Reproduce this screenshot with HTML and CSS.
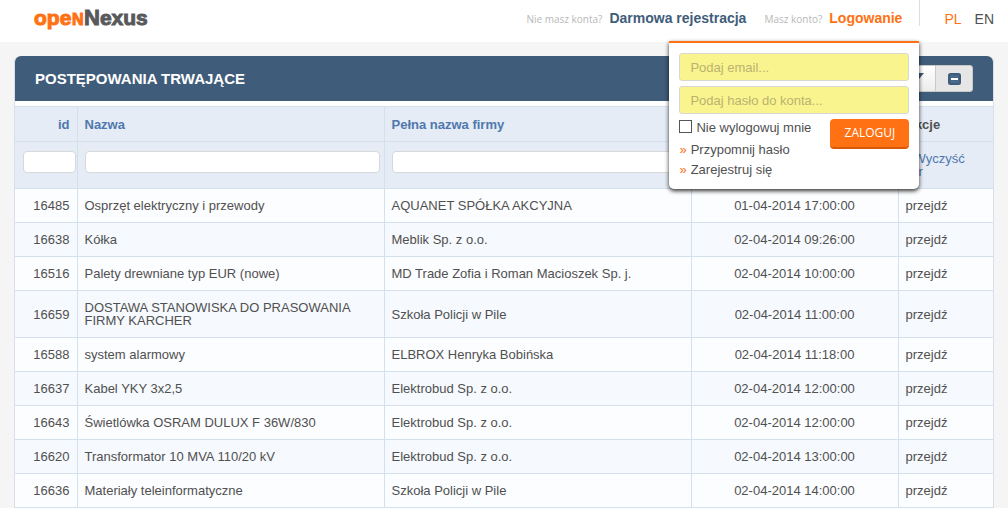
FILE: index.html
```html
<!DOCTYPE html>
<html lang="pl">
<head>
<meta charset="utf-8">
<title>openNexus - Postępowania trwające</title>
<link rel="stylesheet" href="styles.css">
</head>
<body>
<header class="topbar">
  <a class="logo" href="#" aria-label="openNexus">
    <svg width="116" height="26" viewBox="0 0 116 26">
      <g class="logo-open"><text x="0" y="18" font-size="21">ope</text><text x="38" y="18" font-size="16">N</text></g>
      <g class="logo-nexus"><text x="50" y="18" font-size="21"><tspan font-size="22">N</tspan>exus</text></g>
    </svg>
  </a>
  <nav class="account">
    <div class="account-item"><span class="hint">Nie masz konta?</span><a class="register" href="#">Darmowa rejestracja</a></div>
    <div class="account-item"><span class="hint">Masz konto?</span><a class="login-link" href="#">Logowanie</a></div>
    <form class="login">
      <input class="field" type="email" placeholder="Podaj email..." aria-label="Podaj email">
      <input class="field" type="password" placeholder="Podaj hasło do konta..." aria-label="Podaj hasło do konta">
      <div class="login-body">
        <div class="login-options">
          <label class="remember"><input class="check" type="checkbox">Nie wylogowuj mnie</label>
          <a class="option" href="#"><span class="arrow">»</span>Przypomnij hasło</a>
          <a class="option" href="#"><span class="arrow">»</span>Zarejestruj się</a>
        </div>
        <button class="submit" type="button">ZALOGUJ</button>
      </div>
    </form>
  </nav>
  <nav class="langs"><a class="lang active" href="#">PL</a><a class="lang" href="#">EN</a></nav>
</header>
<main class="panel">
  <div class="panel-head">
    <h1 class="title">POSTĘPOWANIA TRWAJĄCE</h1>
    <div class="tools">
      <button class="tool" type="button" aria-label="Filtruj"><svg width="14" height="12" viewBox="0 0 14 12"><path d="M0 0h14L9 6v6L5 9V6z" fill="#3f5c7a"/></svg></button>
      <button class="tool pressed" type="button" aria-label="Zwiń"><svg width="13" height="12" viewBox="0 0 13 12"><rect x="1" y="1" width="11" height="10" rx="1.5" fill="#4a6888" stroke="#3f5c7a" stroke-width="2"/><path d="M3 5h7v2H3z" fill="#fff"/></svg></button>
    </div>
  </div>
  <table class="grid">
    <colgroup><col class="c-id"><col class="c-name"><col class="c-firm"><col class="c-date"><col class="c-act"></colgroup>
    <thead>
      <tr class="heads"><th class="num"><a href="#">id</a></th><th><a href="#">Nazwa</a></th><th><a href="#">Pełna nazwa firmy</a></th><th></th><th>Akcje</th></tr>
      <tr class="filters"><td class="filter-id"><input class="filter" type="text" aria-label="id"></td><td><input class="filter" type="text" aria-label="Nazwa"></td><td><input class="filter" type="text" aria-label="Pełna nazwa firmy"></td><td></td><td><a class="clear" href="#">Wyczyść filtr</a></td></tr>
    </thead>
    <tbody>
      <tr><td class="num">16485</td><td>Osprzęt elektryczny i przewody</td><td>AQUANET SPÓŁKA AKCYJNA</td><td class="date">01-04-2014 17:00:00</td><td><a href="#">przejdź</a></td></tr>
      <tr><td class="num">16638</td><td>Kółka</td><td>Meblik Sp. z o.o.</td><td class="date">02-04-2014 09:26:00</td><td><a href="#">przejdź</a></td></tr>
      <tr><td class="num">16516</td><td>Palety drewniane typ EUR (nowe)</td><td>MD Trade Zofia i Roman Macioszek Sp. j.</td><td class="date">02-04-2014 10:00:00</td><td><a href="#">przejdź</a></td></tr>
      <tr><td class="num">16659</td><td>DOSTAWA STANOWISKA DO PRASOWANIA FIRMY KARCHER</td><td>Szkoła Policji w Pile</td><td class="date">02-04-2014 11:00:00</td><td><a href="#">przejdź</a></td></tr>
      <tr><td class="num">16588</td><td>system alarmowy</td><td>ELBROX Henryka Bobińska</td><td class="date">02-04-2014 11:18:00</td><td><a href="#">przejdź</a></td></tr>
      <tr><td class="num">16637</td><td>Kabel YKY 3x2,5</td><td>Elektrobud Sp. z o.o.</td><td class="date">02-04-2014 12:00:00</td><td><a href="#">przejdź</a></td></tr>
      <tr><td class="num">16643</td><td>Świetlówka OSRAM DULUX F 36W/830</td><td>Elektrobud Sp. z o.o.</td><td class="date">02-04-2014 12:00:00</td><td><a href="#">przejdź</a></td></tr>
      <tr><td class="num">16620</td><td>Transformator 10 MVA 110/20 kV</td><td>Elektrobud Sp. z o.o.</td><td class="date">02-04-2014 13:00:00</td><td><a href="#">przejdź</a></td></tr>
      <tr><td class="num">16636</td><td>Materiały teleinformatyczne</td><td>Szkoła Policji w Pile</td><td class="date">02-04-2014 14:00:00</td><td><a href="#">przejdź</a></td></tr>
    </tbody>
  </table>
</main>
</body>
</html>
```
FILE: styles.css
```css
* { box-sizing: border-box; }
body { margin: 0; background: #f5f5f5; color: #505050; font: 13px/13px "Liberation Sans", Arial, sans-serif; }
a { color: inherit; text-decoration: none; }
input, button { font: inherit; margin: 0; }

.topbar { display: flex; align-items: flex-start; height: 42px; padding-left: 34px; background: #fff; }
.logo { padding-top: 7px; }
.logo svg { display: block; overflow: visible; font-weight: bold; stroke-width: 1; }
.logo-open { fill: #ff7112; stroke: #ff7112; }
.logo-nexus { fill: #58595b; stroke: #58595b; }
.account { position: relative; display: flex; gap: 18px; height: 26px; margin-left: auto; padding: 10px 17px 0 0; border-right: 1px solid #ddd; }
.account-item { display: flex; align-items: baseline; gap: 7px; height: 16px; line-height: 16px; font-size: 14px; font-weight: bold; }
.hint { color: #b8b8b8; font: 10px/16px "Open Sans", sans-serif; }
.register { color: #3f5c7a; }
.login-link { color: #ff7112; }
.langs { display: flex; gap: 13px; padding: 11px 14px 0 24px; font-size: 14px; line-height: 16px; }
.lang.active { color: #ff7112; }

.login { position: absolute; z-index: 2; top: 41px; right: 0; width: 250px; padding: 10px 10px 9px; background: #fff; border-top: 2px solid #ff7112; border-radius: 0 0 5px 5px; box-shadow: 0 2px 4px rgba(0, 0, 0, .8); }
.field { display: block; width: 100%; height: 28px; margin-bottom: 5px; padding: 0 10px; background: #faf48f; border: 1px solid #d8d8d0; border-radius: 3px; }
.field::placeholder { color: #b9b36f; opacity: 1; }
.login-body { display: flex; justify-content: space-between; align-items: flex-start; }
.login-options { display: flex; flex-direction: column; line-height: 20px; }
.remember { display: flex; align-items: center; gap: 4px; height: 20px; margin: -1px 0 2px; }
.check { appearance: none; width: 13px; height: 13px; margin-bottom: 4px; background: #fff; border: 1px solid #555; }
.option { display: flex; gap: 4px; }
.arrow { color: #ff7112; }
.submit { width: 79px; height: 30px; padding: 0; color: #fff; background: #ff7112; border: 0; border-bottom: 2px solid #d9580a; border-radius: 4px; font: 12px/16px "Open Sans", sans-serif; }

.panel { margin: 14px 14px 0; background: #fff; border: 1px solid #d8dfe8; border-top: 0; border-bottom: 0; border-radius: 6px 6px 0 0; }
.panel-head { display: flex; align-items: center; justify-content: space-between; height: 45px; padding: 0 20px; background: #3f5c7a; border-radius: 6px 6px 0 0; }
.title { margin: 0; color: #fff; font-size: 15px; line-height: 18px; }
.tools { display: flex; }
.tool { display: flex; align-items: center; justify-content: center; width: 38px; height: 27px; padding: 0; background: linear-gradient(#fff, #ececec); border: 1px solid #c8c8c8; border-radius: 3px 0 0 3px; }
.tool.pressed { margin-left: -1px; background: #e6e6e6; border-radius: 0 3px 3px 0; }

.grid { width: 100%; margin-top: 5px; table-layout: fixed; border-collapse: collapse; }
.c-id { width: 62px; }
.c-date { width: 207px; }
.c-act { width: 95px; }
.grid th, .grid td { height: 34px; padding: 10px 7px; border: 1px solid #d3e0ee; text-align: left; vertical-align: middle; }
.grid tr > :first-child { border-left: 0; }
.grid tr > :last-child { border-right: 0; }
.grid thead { background: #e5ecf5; }
.grid .heads th { height: 35px; }
.grid th a, .grid .clear { color: #4f78ae; }
.grid .filters td { height: 47px; padding: 9px 4px 9px 7px; vertical-align: top; }
.grid .filters .filter-id { padding: 9px 1px 9px 8px; }
.grid .filters td:last-child { padding: 9px 20px 9px 7px; text-indent: 8px; vertical-align: middle; }
.filter { display: block; width: 100%; height: 22px; padding: 0 4px; background: #fff; border: 1px solid #d8d8d8; border-radius: 4px; }
.grid tbody tr { background: #fcfdff; }
.grid tbody tr:nth-child(even) { background: #f6f9fd; }
.grid .num { text-align: right; }
.grid .date { text-align: center; }
```
